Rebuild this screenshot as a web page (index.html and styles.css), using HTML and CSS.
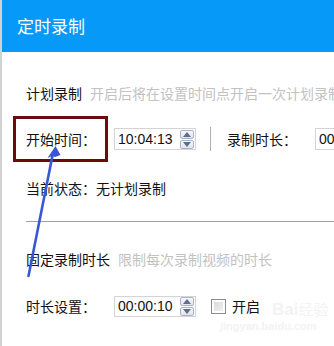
FILE: index.html
```html
<!DOCTYPE html>
<html lang="zh-CN">
<head>
<meta charset="utf-8">
<link rel="stylesheet" href="styles.css">
</head>
<body>
<div class="app">
  <div class="header">定时录制</div>
  <div class="content">
    <div class="sec-title">计划录制<span class="hint">开启后将在设置时间点开启一次计划录制</span></div>
    <div class="row row1">
      <span class="label">开始时间：</span>
      <div class="spin-input"><span class="val">10:04:13</span>
        <div class="spinner"><div class="sbtn"><svg width="8" height="5" viewBox="0 0 8 5"><path d="M0 5 L4 0 L8 5Z" fill="#5f6d8c"/></svg></div><div class="sbtn"><svg width="8" height="5" viewBox="0 0 8 5"><path d="M0 0 L4 5 L8 0Z" fill="#5f6d8c"/></svg></div></div>
      </div>
      <span class="vsep"></span>
      <span class="label label2">录制时长：</span>
      <div class="spin-input"><span class="val">00:00:10</span></div>
    </div>
    <div class="status">当前状态：无计划录制</div>
    <div class="hr"></div>
    <div class="sec-title sec2">固定录制时长<span class="hint">限制每次录制视频的时长</span></div>
    <div class="row row2">
      <span class="label">时长设置：</span>
      <div class="spin-input small"><span class="val">00:00:10</span>
        <div class="spinner"><div class="sbtn"><svg width="8" height="5" viewBox="0 0 8 5"><path d="M0 5 L4 0 L8 5Z" fill="#5f6d8c"/></svg></div><div class="sbtn"><svg width="8" height="5" viewBox="0 0 8 5"><path d="M0 0 L4 5 L8 0Z" fill="#5f6d8c"/></svg></div></div>
      </div>
      <span class="checkbox"></span>
      <span class="cb-label">开启</span>
    </div>
  </div>
  <div class="redbox"></div>
  <div class="watermark"><div class="wm1">Bai<span>经验</span></div><div class="wm2">jingyan.baidu.com</div></div>
  <svg class="arrow" width="334" height="346" viewBox="0 0 334 346">
    <path d="M28.5 276 L53 153" stroke="#3957d2" stroke-width="2.6" fill="none" stroke-linecap="round"/>
    <path d="M55.5 146 L47.5 158 L52 156 L55 157 L60.5 155 Z" fill="#3957d2"/>
  </svg>
</div>
</body>
</html>
```
FILE: styles.css
```css
* { box-sizing: border-box; }
html, body { margin: 0; padding: 0; }
body {
  width: 334px;
  height: 346px;
  overflow: hidden;
  background: #fff;
  font-family: "Liberation Sans", "Noto Sans CJK SC", sans-serif;
  color: #111;
}
.app {
  position: relative;
  width: 334px;
  height: 346px;
  border-left: 2px solid #d2d2d2;
  overflow: hidden;
}
.header {
  height: 52px;
  background: #0799f8;
  color: #fff;
  font-family: "Noto Sans CJK SC", sans-serif;
  font-size: 17px;
  line-height: 52px;
  padding-left: 15px;
}
.content {
  padding-left: 24px;
  font-size: 14px;
  white-space: nowrap;
}
.sec-title {
  margin-top: 31px;
  height: 20px;
  line-height: 20px;
  font-family: "Noto Sans CJK SC", sans-serif;
}
.hint {
  color: #c2c2c2;
  margin-left: 8px;
}
.row {
  display: flex;
  align-items: center;
  height: 22px;
}
.row1 { margin-top: 25px; }
.label {
  width: 88px;
  flex: none;
  font-family: "Noto Sans CJK SC", sans-serif;
  line-height: 22px;
}
.label2 { width: 88px; }
.spin-input {
  flex: none;
  width: 82px;
  height: 22px;
  border: 1px solid #d4d4d4;
  display: flex;
  align-items: center;
  justify-content: space-between;
  padding-left: 3px;
  padding-right: 1px;
}
.spin-input.small { height: 21px; }
.val {
  font-size: 14px;
  line-height: 20px;
  color: #111;
}
.spinner {
  display: flex;
  flex-direction: column;
  gap: 1px;
}
.sbtn {
  width: 14px;
  height: 9px;
  border: 1px solid #aab4c6;
  border-radius: 2px;
  background: linear-gradient(#f6f8fb, #dfe4ee);
  display: flex;
  align-items: center;
  justify-content: center;
}
.sbtn svg { display: block; }
.vsep {
  flex: none;
  width: 1px;
  height: 24px;
  background: #b0b0b0;
  margin-left: 14px;
  margin-right: 16px;
}
.status {
  margin-top: 28px;
  height: 20px;
  line-height: 20px;
  font-family: "Noto Sans CJK SC", sans-serif;
}
.hr {
  margin-top: 23px;
  height: 1px;
  background: #a0a0a0;
}
.sec2 { margin-top: 27px; }
.row2 { margin-top: 26px; }
.checkbox {
  flex: none;
  width: 15px;
  height: 15px;
  border: 1px solid #8c8c8c;
  background: linear-gradient(135deg, #d6d6d6, #f4f4f4);
  box-shadow: inset 0 0 0 2px #fff;
  margin-left: 15px;
}
.cb-label {
  margin-left: 6px;
  font-family: "Noto Sans CJK SC", sans-serif;
  line-height: 22px;
}
.redbox {
  position: absolute;
  left: 11px;
  top: 116px;
  width: 95px;
  height: 46px;
  border: 3px solid #6c0a0c;
}
.watermark {
  position: absolute;
  left: 218px;
  top: 300px;
  color: #f3f3f3;
  font-family: "Liberation Sans", "Noto Sans CJK SC", sans-serif;
}
.wm1 {
  font-size: 17px;
  font-weight: bold;
  line-height: 20px;
  padding-left: 52px;
}
.wm1 span { font-weight: normal; font-size: 15px; }
.wm2 {
  font-size: 11px;
  line-height: 12px;
  font-weight: bold;
}
.arrow {
  position: absolute;
  left: -2px;
  top: 0;
}
```
